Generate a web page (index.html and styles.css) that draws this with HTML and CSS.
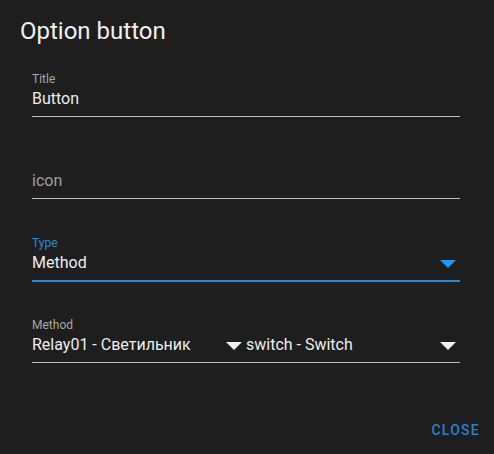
FILE: index.html
```html
<!DOCTYPE html>
<html>
<head>
<meta charset="utf-8">
<link rel="stylesheet" href="styles.css">
</head>
<body>
<div class="dialog">
  <h2 class="title">Option button</h2>
  <div class="content">
    <div class="field">
      <div class="label">Title</div>
      <div class="value">Button</div>
      <div class="line"></div>
    </div>
    <div class="field">
      <div class="label"></div>
      <div class="value placeholder">icon</div>
      <div class="line"></div>
    </div>
    <div class="field focused">
      <div class="label">Type</div>
      <div class="value row">
        <span>Method</span>
        <svg class="arrow" viewBox="0 0 16 8" width="16" height="8"><path d="M0 0H16L8 8Z"/></svg>
      </div>
      <div class="line"></div>
    </div>
    <div class="field split">
      <div class="half">
        <div class="label">Method</div>
        <div class="value row">
          <span>Relay01 - Светильник</span>
          <svg class="arrow" viewBox="0 0 16 8" width="16" height="8"><path d="M0 0H16L8 8Z"/></svg>
        </div>
        <div class="line"></div>
      </div>
      <div class="half">
        <div class="label"></div>
        <div class="value row">
          <span>switch - Switch</span>
          <svg class="arrow" viewBox="0 0 16 8" width="16" height="8"><path d="M0 0H16L8 8Z"/></svg>
        </div>
        <div class="line"></div>
      </div>
    </div>
  </div>
  <div class="actions">
    <button class="btn">CLOSE</button>
  </div>
</div>
</body>
</html>
```
FILE: styles.css
```css
html, body {
  margin: 0;
  padding: 0;
  background: #1e1e1e;
}
body {
  font-family: Roboto, "Noto Sans", sans-serif;
  color: #e1e1e1;
  width: 494px;
  height: 454px;
  overflow: hidden;
}
.dialog {
  display: flex;
  flex-direction: column;
  height: 454px;
}
.title {
  margin: 0;
  padding: 16px 20px 0;
  font-size: 24px;
  font-weight: 400;
  line-height: 30px;
  color: #f0f0f0;
}
.content {
  padding: 26px 34px 0 32px;
  display: flex;
  flex-direction: column;
  gap: 4px;
}
.field {
  height: 78px;
  display: flex;
  flex-direction: column;
}
.label {
  font-size: 12px;
  line-height: 14px;
  height: 14px;
  color: #a8a8a8;
}
.value {
  font-size: 16px;
  line-height: 24px;
  height: 24px;
  color: #ececec;
  margin-top: 1px;
}
.placeholder {
  color: #9e9e9e;
}
.line {
  height: 1px;
  background: #bdbdbd;
  margin-top: 5px;
}
.row {
  display: flex;
  align-items: center;
  justify-content: space-between;
  padding-right: 4px;
}
.arrow {
  fill: #f0f0f0;
  margin-top: 1px;
}
.focused .label {
  color: #2a8ad6;
}
.focused .line {
  height: 2px;
  background: #2a8ad6;
}
.focused .arrow {
  fill: #2196f3;
}
.split {
  flex-direction: row;
}
.half {
  flex: 0 0 214px;
  display: flex;
  flex-direction: column;
}
.actions {
  margin-top: auto;
  display: flex;
  justify-content: flex-end;
  padding: 0 6px 6px;
}
.btn {
  background: none;
  border: none;
  font-family: Roboto, sans-serif;
  font-size: 14px;
  font-weight: 500;
  letter-spacing: 1.25px;
  color: #2a7fcf;
  padding: 0 8px;
  height: 36px;
  margin-bottom: 0;
}
```
